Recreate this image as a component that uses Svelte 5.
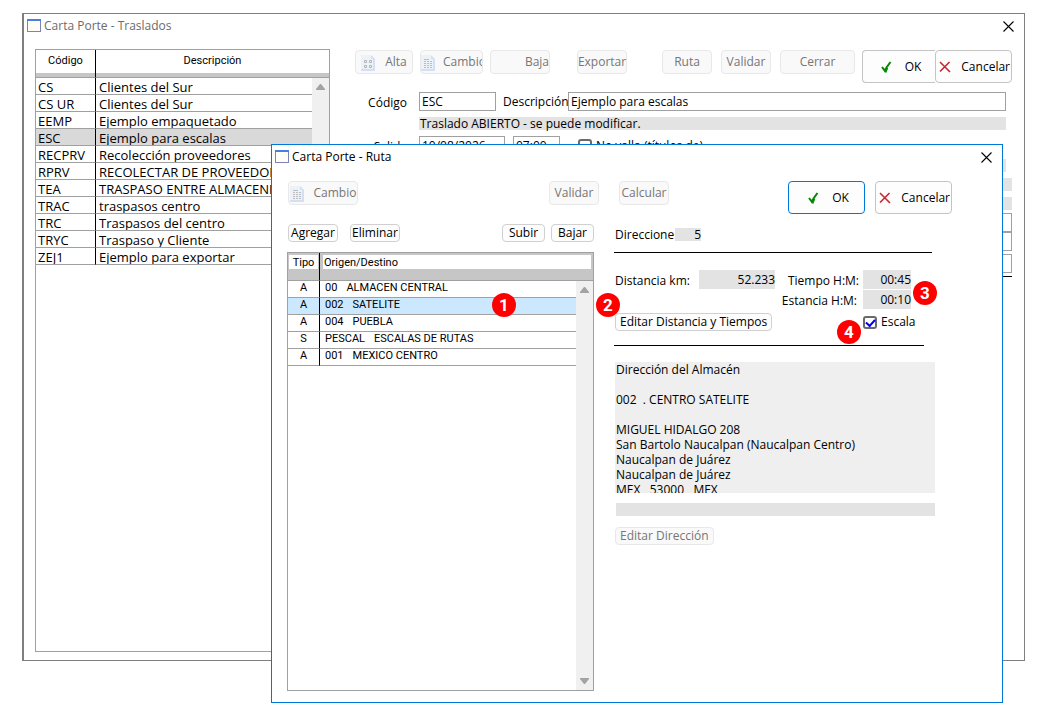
<script>
  const traslados = [
    { codigo: "CS", descripcion: "Clientes del Sur" },
    { codigo: "CS UR", descripcion: "Clientes del Sur" },
    { codigo: "EEMP", descripcion: "Ejemplo empaquetado" },
    { codigo: "ESC", descripcion: "Ejemplo para escalas" },
    { codigo: "RECPRV", descripcion: "Recolección proveedores" },
    { codigo: "RPRV", descripcion: "RECOLECTAR DE PROVEEDORES" },
    { codigo: "TEA", descripcion: "TRASPASO ENTRE ALMACENES" },
    { codigo: "TRAC", descripcion: "traspasos centro" },
    { codigo: "TRC", descripcion: "Traspasos del centro" },
    { codigo: "TRYC", descripcion: "Traspaso y Cliente" },
    { codigo: "ZEJ1", descripcion: "Ejemplo para exportar" },
  ];

  const paradas = [
    { tipo: "A", clave: "00", nombre: "ALMACEN CENTRAL" },
    { tipo: "A", clave: "002", nombre: "SATELITE" },
    { tipo: "A", clave: "004", nombre: "PUEBLA" },
    { tipo: "S", clave: "PESCAL", nombre: "ESCALAS DE RUTAS" },
    { tipo: "A", clave: "001", nombre: "MEXICO CENTRO" },
  ];

  const domicilio = [
    "Dirección del Almacén",
    "",
    "002  . CENTRO SATELITE",
    "",
    "MIGUEL HIDALGO 208",
    "San Bartolo Naucalpan (Naucalpan Centro)",
    "Naucalpan de Juárez",
    "Naucalpan de Juárez",
    "MEX   53000   MEX",
  ].join("\n");

  let traslado = $state("ESC");
  let parada = $state("002");
  let codigo = $state("ESC");
  let descripcion = $state("Ejemplo para escalas");
  let fecha = $state("10/08/2026");
  let hora = $state("07:00");
  let escala = $state(true);
  let sinDetalle = $state(false);
</script>

{#snippet winIcon()}
  <svg class="win-icon" width="14" height="14" viewBox="0 0 14 14" aria-hidden="true">
    <rect x="0.5" y="0.5" width="13" height="12" fill="#fffdf5" stroke="#7d83b8" />
    <rect x="0" y="0" width="14" height="2" fill="#4a7fe0" />
  </svg>
{/snippet}

{#snippet closeIcon()}
  <svg width="11" height="11" viewBox="0 0 11 11" aria-hidden="true">
    <path d="M0.5 0.5 L10.5 10.5 M10.5 0.5 L0.5 10.5" stroke="#000" stroke-width="1.1" />
  </svg>
{/snippet}

{#snippet check()}
  <svg width="12" height="12" viewBox="0 0 12 12" aria-hidden="true">
    <path d="M1 6 L4 10 L5.5 6.5 L9.5 1" fill="none" stroke="#008a00" stroke-width="2" />
    <path d="M3 8 L5 10.5 L6.5 7" fill="none" stroke="#008a00" stroke-width="1.5" />
  </svg>
{/snippet}

{#snippet cross()}
  <svg width="12" height="12" viewBox="0 0 12 12" aria-hidden="true">
    <path d="M1 1 L11 11 M10.5 1 L1 10.5" stroke="#c8282d" stroke-width="1.6" />
  </svg>
{/snippet}

{#snippet sheet(cards)}
  <svg class="sheet" width="14" height="16" viewBox="0 0 14 16" aria-hidden="true">
    <path d="M0 0 H10 L14 4 V16 H0 Z" fill="#edf1f8" />
    <path d="M10 0 V4 H14 Z M12 4 H14 V16 H12 Z M0 14 H14 V16 H0 Z" fill="#d3e0f3" />
    {#if cards}
      <path d="M3.5 5.5 h2 v2 h-2 z M8.5 5.5 h2 v2 h-2 z M3.5 10.5 h2 v2 h-2 z M8.5 10.5 h2 v2 h-2 z" fill="none" stroke="#b4b4b4" />
    {:else}
      <path d="M3 4.5 H8 M3 6.5 H5 M6 6.5 H8 M9 6.5 H11 M3 8.5 H5 M6 8.5 H8 M9 8.5 H11 M3 10.5 H5 M6 10.5 H8 M9 10.5 H11 M3 12.5 H5 M6 12.5 H8 M9 12.5 H11" stroke="#bdbdbd" />
    {/if}
  </svg>
{/snippet}

{#snippet scrollbar()}
  <div class="scroll" aria-hidden="true">
    <svg width="9" height="6" viewBox="0 0 9 6"><path d="M4 0 H5 L9 5 V6 H0 V5 Z" fill="#a3a3a3" /></svg>
    <svg width="9" height="6" viewBox="0 0 9 6"><path d="M0 0 H9 V1 L5 6 H4 L0 1 Z" fill="#a3a3a3" /></svg>
  </div>
{/snippet}

<div class="desktop">
  <main class="window traslados">
    <header class="title">
      {@render winIcon()}
      <span>Carta Porte - Traslados</span>
      <button class="close" aria-label="Cerrar ventana">{@render closeIcon()}</button>
    </header>

    <div class="content">
      <section class="list">
        <table class="big">
          <thead>
            <tr><th class="code"><span>Código</span></th><th><span>Descripción</span></th></tr>
          </thead>
          <tbody>
            {#each traslados as fila}
              <tr class:selected={fila.codigo === traslado} onclick={() => (traslado = fila.codigo)}>
                <td><span>{fila.codigo}</span></td>
                <td><span>{fila.descripcion}</span></td>
              </tr>
            {/each}
          </tbody>
        </table>
        {@render scrollbar()}
      </section>

      <section class="detail">
        <div class="toolbar">
          <div class="tools near">
            <button class="tool alta" disabled>{@render sheet(true)}Alta</button>
            <button class="tool cambio" disabled>{@render sheet(false)}Cambio</button>
            <button class="tool baja" disabled>Baja</button>
          </div>
          <button class="tool small exportar" disabled>Exportar</button>
          <div class="tools far">
            <button class="tool small" disabled>Ruta</button>
            <button class="tool small" disabled>Validar</button>
            <button class="tool cerrar" disabled>Cerrar</button>
          </div>
          <div class="tools joined">
            <button class="main ok">{@render check()}OK</button>
            <button class="main cancel">{@render cross()}Cancelar</button>
          </div>
        </div>

        <form class="fields">
          <label for="codigo">Código</label>
          <div class="line">
            <input id="codigo" class="w-code" bind:value={codigo} />
            <label for="descripcion" class="w-label">Descripción</label>
            <input id="descripcion" class="grow" bind:value={descripcion} />
          </div>
          <output class="status">Traslado ABIERTO - se puede modificar.</output>
          <label for="fecha">Salida</label>
          <div class="line dates">
            <input id="fecha" class="w-date" bind:value={fecha} />
            <input class="w-time" aria-label="Hora de salida" bind:value={hora} />
            <label class="tick"><input type="checkbox" bind:checked={sinDetalle} />No valla (títulos de)</label>
          </div>
        </form>

        <div class="rest" aria-hidden="true">
          <div class="shade short"></div>
          <div class="shade"></div>
          <div class="shade"></div>
          <div class="box"></div>
          <div class="box"></div>
          <div class="box apart"></div>
          <hr />
        </div>
      </section>
    </div>
  </main>

  <div class="window ruta" role="dialog" aria-label="Carta Porte - Ruta">
    <header class="title">
      {@render winIcon()}
      <span>Carta Porte - Ruta</span>
      <button class="close" aria-label="Cerrar ventana">{@render closeIcon()}</button>
    </header>

    <div class="content">
      <section class="stops">
        <div class="bar">
          <button class="tool cambio-ruta" disabled>{@render sheet(false)}Cambio</button>
          <button class="tool small validar" disabled>Validar</button>
        </div>
        <div class="actions">
          <button class="action">Agregar</button>
          <button class="action">Eliminar</button>
          <button class="action order first">Subir</button>
          <button class="action order">Bajar</button>
        </div>
        <div class="list">
          <table class="pixel">
            <thead>
              <tr><th class="type"><span>Tipo</span></th><th><span>Origen/Destino</span></th></tr>
            </thead>
            <tbody>
              {#each paradas as fila}
                <tr class:selected={fila.clave === parada} onclick={() => (parada = fila.clave)}>
                  <td><span>{fila.tipo}</span></td>
                  <td><span>{fila.clave}<i></i>{fila.nombre}</span></td>
                </tr>
              {/each}
            </tbody>
          </table>
          {@render scrollbar()}
          <b class="badge one">1</b>
        </div>
      </section>

      <section class="stop">
        <div class="bar">
          <button class="tool small" disabled>Calcular</button>
          <button class="main ok default">{@render check()}OK</button>
          <button class="main cancel">{@render cross()}Cancelar</button>
        </div>
        <div class="count">
          <label for="direcciones">Direccione</label>
          <output id="direcciones">5</output>
        </div>
        <hr />
        <div class="times">
          <label for="distancia">Distancia km:</label>
          <output id="distancia">52.233</output>
          <label for="tiempo" class="right">Tiempo H:M:</label>
          <output id="tiempo">00:45</output>
          <label for="estancia" class="right stay">Estancia H:M:</label>
          <output id="estancia">00:10<b class="badge three">3</b></output>
        </div>
        <div class="edit">
          <button class="action">Editar Distancia y Tiempos</button>
          <b class="badge two">2</b>
          <label class="tick"><input type="checkbox" bind:checked={escala} />Escala<b class="badge four">4</b></label>
        </div>
        <hr class="short" />
        <textarea readonly aria-label="Domicilio" value={domicilio}></textarea>
        <div class="note"></div>
        <button class="action" disabled>Editar Dirección</button>
      </section>
    </div>
  </div>
</div>

<style>
  :global(body) {
    background: #fff;
  }

  .desktop {
    position: relative;
    padding: 13px 22px 12px;
    font-family: "Open Sans", "Noto Sans", sans-serif;
    font-size: 12px;
    line-height: 16px;
    color: #000;
  }

  .desktop * {
    box-sizing: border-box;
  }

  button,
  input,
  textarea {
    font: inherit;
    color: inherit;
    margin: 0;
  }

  .window {
    background: #fff;
    border: 1px solid #7f7f7f;
  }

  .traslados {
    border-left-width: 2px;
    min-height: 648px;
    margin-bottom: 42px;
  }

  .ruta {
    position: absolute;
    top: 144px;
    left: 271px;
    right: 44px;
    border-color: #0078d7;
  }

  .title {
    display: flex;
    align-items: center;
    gap: 3px;
    height: 24px;
    padding: 0 10px 0 3px;
  }

  .traslados .title {
    color: #6b6b6b;
  }

  .close {
    display: flex;
    margin-left: auto;
    padding: 0;
    border: 0;
    background: none;
  }

  .content {
    display: flex;
  }

  .traslados .content {
    gap: 25px;
    padding: 11px 12px 8px 11px;
  }

  .ruta .content {
    gap: 20px;
    padding: 12px 50px 11px 15px;
  }

  /* lists */
  .list {
    position: relative;
    border: 1px solid #a0a0a0;
    background: #fff;
  }

  .traslados .list {
    flex: none;
    width: 295px;
    min-height: 603px;
  }

  .stops .list {
    min-height: 439px;
    margin-top: 10px;
  }

  table {
    width: 100%;
    border-collapse: separate;
    border-spacing: 0;
    table-layout: fixed;
  }

  th {
    height: 28px;
    padding: 0;
    border-bottom: 1px solid #a0a0a0;
    background: #c6c6c6;
    vertical-align: top;
    font-size: 11px;
    font-weight: normal;
  }

  th,
  .pixel td {
    font-family: Roboto, "Liberation Sans", sans-serif;
  }

  th span {
    display: block;
    background: #fff;
  }

  th:first-child,
  td:first-child {
    border-right: 1px solid #000;
  }

  .big th span {
    height: 23px;
    line-height: 21px;
  }

  .code {
    width: 60px;
  }

  .type {
    width: 32px;
  }

  .pixel th span {
    margin: 2px 1px;
    height: 14px;
    line-height: 15px;
  }

  .pixel th:last-child span {
    margin: 2px 2px 2px 3px;
    padding-left: 1px;
    text-align: left;
  }

  td {
    height: 17px;
    padding: 0;
    border-bottom: 1px solid #a0a0a0;
  }

  td span {
    display: block;
    height: 16px;
    overflow: hidden;
    white-space: nowrap;
  }

  .big td span {
    padding-left: 3px;
    font-size: 13px;
    line-height: 19px;
  }

  .big td:first-child span {
    padding-left: 2px;
  }

  .pixel td span {
    padding-left: 5px;
    font-size: 11px;
    line-height: 14px;
  }

  .pixel td:first-child span {
    padding: 0;
    text-align: center;
  }

  .pixel i {
    display: inline-block;
    width: 9px;
  }

  .big .selected {
    background: #d9d9d9;
  }

  .pixel .selected {
    background: #cce8ff;
  }

  .scroll {
    position: absolute;
    top: 28px;
    right: 0;
    bottom: 0;
    display: flex;
    flex-direction: column;
    justify-content: space-between;
    align-items: center;
    width: 17px;
    padding: 6px 0;
    background: #f0f0f0;
  }

  /* buttons */
  .tool,
  .main,
  .action {
    flex: none;
    display: flex;
    align-items: center;
    justify-content: center;
    padding: 0;
    border: 1px solid #d0d0d0;
    border-radius: 4px;
    background: #fdfdfd;
    white-space: nowrap;
  }

  .tool {
    height: 24px;
    padding-bottom: 1px;
    border-color: #e8e8e8;
    background: #f9f9f9;
    color: #767676;
  }

  .sheet {
    flex: none;
    margin-top: 2px;
  }

  .small {
    width: 50px;
  }

  .alta {
    width: 58px;
    gap: 10px;
  }

  .cambio {
    width: 63px;
    gap: 8px;
    justify-content: flex-start;
    overflow: hidden;
  }

  .baja {
    width: 60px;
    justify-content: flex-end;
  }

  .cerrar {
    width: 75px;
  }

  .main {
    width: 77px;
    height: 33px;
    border-color: #c4c4c4;
  }

  .ok {
    gap: 12px;
    padding-left: 4px;
  }

  .cancel {
    gap: 10px;
    justify-content: flex-end;
    padding-right: 1px;
  }

  .default {
    border-color: #0078d7;
  }

  .action {
    height: 18px;
    padding: 0 4px 1px;
  }

  .action:disabled {
    border-color: #e8e8e8;
    background: #f9f9f9;
    color: #767676;
  }

  .toolbar {
    display: flex;
    align-items: flex-start;
    padding-top: 1px;
  }

  .tools {
    display: flex;
    gap: 9px;
  }

  .near {
    gap: 7px;
  }

  .exportar {
    margin-left: 27px;
  }

  .far {
    margin-left: auto;
  }

  .joined {
    gap: 0;
    margin-left: 7px;
  }

  .joined .ok {
    width: 73px;
    border-right: 0;
    border-radius: 4px 0 0 4px;
  }

  /* shipment form */
  .detail {
    flex: 1;
    min-width: 0;
  }

  .fields {
    display: grid;
    grid-template-columns: 52px 1fr;
    gap: 6px 12px;
    align-items: center;
    margin-top: 9px;
    padding-right: 6px;
  }

  .fields > label {
    padding-top: 2px;
    text-align: right;
  }

  .line {
    display: flex;
    align-items: center;
  }

  .line input:not([type]) {
    height: 19px;
    min-width: 0;
    padding: 0 2px;
    border: 1px solid #a0a0a0;
    background: #fff;
  }

  .line .w-code {
    width: 77px;
    margin-right: 7px;
  }

  .w-label {
    width: 65px;
    white-space: nowrap;
  }

  .line .grow {
    flex: 1;
  }

  .w-date {
    width: 86px;
  }

  .w-time {
    width: 47px;
  }

  .dates {
    gap: 8px;
  }

  .dates .tick {
    margin-left: 10px;
  }

  .status {
    grid-column: 2;
    height: 13px;
    padding-left: 1px;
    line-height: 14px;
    background: #e3e3e3;
  }

  .rest {
    margin-top: 4px;
  }

  .shade {
    height: 13px;
    margin-bottom: 6px;
    background: #e3e3e3;
  }

  .shade.short {
    margin-right: 6px;
  }

  .shade:nth-child(3) {
    margin-bottom: 3px;
  }

  .box {
    height: 19px;
    border: 1px solid #a0a0a0;
  }

  .apart {
    margin: 3px 0;
  }

  hr {
    height: 1px;
    margin: 0;
    border: 0;
    background: #000;
  }

  .tick {
    position: relative;
    display: flex;
    align-items: center;
    gap: 4px;
  }

  .tick input {
    appearance: none;
    flex: none;
    display: grid;
    place-items: center;
    width: 14px;
    height: 13px;
    border: 2px solid #6a6a6a;
    border-radius: 3px;
    background: #fff;
  }

  .tick input:checked::before {
    content: "";
    width: 7px;
    height: 4px;
    border: solid #0000f0;
    border-width: 0 0 2px 2px;
    transform: rotate(-48deg);
  }

  /* route */
  .stops {
    flex: none;
    width: 307px;
  }

  .stop {
    flex: 1;
    max-width: 338px;
    min-width: 0;
  }

  .bar {
    display: flex;
    align-items: flex-start;
    gap: 10px;
    height: 33px;
  }

  .stops .bar {
    padding-left: 1px;
    margin-right: -5px;
  }

  .stop .bar {
    padding-left: 5px;
  }

  .cambio-ruta {
    width: 70px;
    gap: 10px;
  }

  .validar,
  .stop .bar .ok {
    margin-left: auto;
  }

  .actions {
    display: flex;
    gap: 12px;
    padding-left: 1px;
    margin-top: 10px;
  }

  .actions .action {
    width: 50px;
    padding: 0 0 1px;
  }

  .actions .order {
    width: 43px;
    margin-left: -6px;
  }

  .actions .first {
    margin-left: auto;
  }

  output {
    display: block;
    background: #e3e3e3;
  }

  .count {
    display: flex;
    align-items: center;
    height: 16px;
    margin: 12px 0 10px 1px;
  }

  .count label {
    width: 60px;
    padding-top: 2px;
  }

  .count output {
    width: 26px;
    height: 13px;
    line-height: 13px;
    text-align: right;
  }

  .stop hr {
    margin-right: 20px;
  }

  .stop hr.short {
    margin-right: 28px;
  }

  .times {
    display: grid;
    grid-template-columns: 84px 76px 88px 48px;
    row-gap: 1px;
    align-items: center;
    margin: 17px 0 0 1px;
  }

  .times label {
    padding-top: 2px;
    white-space: nowrap;
  }

  .times .right {
    padding-right: 4px;
    text-align: right;
  }

  .times .stay {
    grid-column: 3;
    padding-right: 6px;
  }

  .times output {
    position: relative;
    height: 19px;
    line-height: 19px;
    text-align: right;
  }

  .edit {
    position: relative;
    display: flex;
    align-items: center;
    justify-content: space-between;
    width: 298px;
    height: 18px;
    margin: 4px 0 14px 1px;
  }

  .edit .tick {
    width: 50px;
  }

  textarea {
    display: block;
    width: calc(100% - 18px);
    height: 131px;
    margin: 16px 0 0 1px;
    padding: 0 1px;
    border: 0;
    background: #efefef;
    line-height: 15px;
    resize: none;
    overflow: hidden;
  }

  .note {
    height: 13px;
    margin: 10px 17px 11px 2px;
    background: #e3e3e3;
  }

  .stop > .action {
    margin-left: 1px;
  }

  .badge {
    position: absolute;
    width: 24px;
    height: 24px;
    border-radius: 50%;
    background: #f00;
    color: #fff;
    font: bold 17px/24px Roboto, "Liberation Sans", sans-serif;
    text-align: center;
  }

  .one {
    top: 40px;
    left: 204px;
  }

  .two {
    top: -20px;
    left: -19px;
  }

  .three {
    top: -9px;
    left: 50px;
  }

  .four {
    top: 6px;
    left: -26px;
  }
</style>
